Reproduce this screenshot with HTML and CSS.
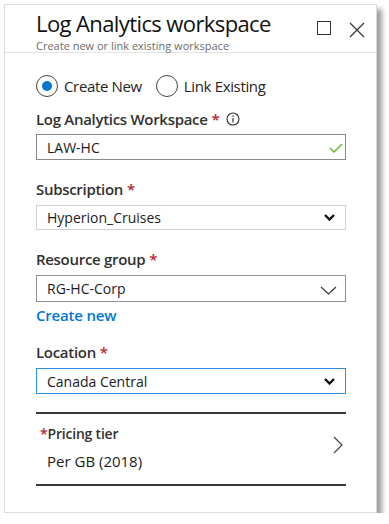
FILE: index.html
```html
<!DOCTYPE html>
<html lang="en">
<head>
    <meta charset="UTF-8">
    <meta name="viewport" content="width=device-width, initial-scale=1.0">
    <title>Log Analytics workspace</title>
    <link rel="stylesheet" href="styles.css">
</head>
<body>
    <div class="blade">
        <div class="bladeHeader">
            <div class="bladeTitles">
                <h1>Log Analytics workspace</h1>
                <div class="subtitle">Create new or link existing workspace</div>
            </div>
            <div class="bladeActions">
                <svg class="maxIcon" viewBox="0 0 14 14"><rect x="0.5" y="0.5" width="13" height="13" fill="none" stroke="#333" stroke-width="1"/></svg>
                <svg class="closeIcon" viewBox="0 0 16 16"><path d="M1 1 L15 15 M15 1 L1 15" stroke="#333" stroke-width="1.2" fill="none"/></svg>
            </div>
        </div>

        <div class="bladeBody">
            <div class="radioRow">
                <label class="radio checked"><span class="dot"></span>Create New</label>
                <label class="radio"><span class="dot"></span>Link Existing</label>
            </div>

            <!-- Workspace name -->
            <div class="fieldLabel first">Log Analytics Workspace <span class="req">*</span>
                <svg class="infoIcon" viewBox="0 0 14 14"><circle cx="7" cy="7" r="6" fill="none" stroke="#333" stroke-width="1.1"/><path d="M7 6 V10.5" stroke="#333" stroke-width="1.2"/><circle cx="7" cy="4" r="0.8" fill="#333"/></svg>
            </div>
            <div class="textBox valid">
                <span>LAW-HC</span>
                <svg class="checkIcon" viewBox="0 0 14 10"><path d="M1 5 L5 9 L13 1" fill="none" stroke="#5fb526" stroke-width="1.4"/></svg>
            </div>

            <div class="fieldLabel">Subscription <span class="req">*</span></div>
            <div class="dropDown light">
                <span>Hyperion_Cruises</span>
                <svg class="boldChevron" viewBox="0 0 11 7"><path d="M1 1 L5.5 5.5 L10 1" fill="none" stroke="#111" stroke-width="2.4"/></svg>
            </div>

            <div class="fieldLabel">Resource group <span class="req">*</span></div>
            <div class="dropDown tall">
                <span>RG-HC-Corp</span>
                <svg class="thinChevron" viewBox="0 0 17 9"><path d="M1 1 L8.5 8 L16 1" fill="none" stroke="#333" stroke-width="1.1"/></svg>
            </div>
            <a class="createLink" href="#">Create new</a>

            <div class="fieldLabel location">Location <span class="req">*</span></div>
            <div class="dropDown focused">
                <span>Canada Central</span>
                <svg class="boldChevron" viewBox="0 0 11 7"><path d="M1 1 L5.5 5.5 L10 1" fill="none" stroke="#111" stroke-width="2.4"/></svg>
            </div>

            <div class="pricingRow">
                <div class="pricingText">
                    <div class="pricingLabel"><span class="req">*</span>Pricing tier</div>
                    <div class="pricingValue">Per GB (2018)</div>
                </div>
                <svg class="rightChevron" viewBox="0 0 10 18"><path d="M1 1 L9 9 L1 17" fill="none" stroke="#444" stroke-width="1.2"/></svg>
            </div>
        </div>
    </div>
</body>
</html>
```

FILE: styles.css
```css
* {
    box-sizing: border-box;
}

body {
    margin: 0;
    background-color: white;
    font-family: 'Open Sans', 'Noto Sans', sans-serif;
    color: #252423;
}

.blade {
    margin: 4px 0 0 4px;
    width: 373px;
    height: 509px;
    background-color: white;
    border: 1px solid #dcdcdc;
    box-shadow: 5px 5px 5px rgba(0, 0, 0, 0.38);
}

.bladeHeader {
    display: flex;
    align-items: flex-start;
    padding: 5px 11px 0 31px;
    border-bottom: 1px solid #e3e3e3;
}

.bladeTitles {
    flex: 1;
}

h1 {
    margin: 0;
    font-size: 22px;
    line-height: 26px;
    font-weight: 400;
    color: #111;
    letter-spacing: -0.6px;
}

.subtitle {
    margin-top: 4px;
    font-size: 11px;
    line-height: 12px;
    color: #6b6b6b;
}

.bladeActions {
    display: flex;
    align-items: flex-start;
    gap: 18px;
    padding-top: 11px;
}

.maxIcon {
    width: 14px;
    height: 14px;
}

.closeIcon {
    width: 16px;
    height: 16px;
    margin-top: 1px;
}

.bladeBody {
    padding: 0 30px 0 31px;
}

.radioRow {
    display: flex;
    gap: 14px;
    margin-top: 22px;
}

.radio {
    display: flex;
    align-items: center;
    gap: 6px;
    font-size: 15px;
    line-height: 22px;
    letter-spacing: -0.35px;
    color: #252423;
}

.radio .dot {
    position: relative;
    width: 22px;
    height: 22px;
    border: 1px solid #444;
    border-radius: 50%;
}

.radio.checked .dot:after {
    content: "";
    position: absolute;
    left: 5px;
    top: 5px;
    width: 10px;
    height: 10px;
    border-radius: 50%;
    background-color: #0078d4;
}

.fieldLabel {
    display: flex;
    align-items: center;
    gap: 4px;
    margin-top: 19px;
    margin-bottom: 6px;
    font-size: 15px;
    line-height: 20px;
    font-weight: 600;
    letter-spacing: -0.3px;
    color: #323130;
}

.fieldLabel.first {
    margin-top: 12px;
    margin-bottom: 5px;
}

.fieldLabel.location {
    margin-top: 17px;
}

.req {
    color: #b4262c;
    font-weight: 600;
}

.infoIcon {
    width: 14px;
    height: 14px;
    margin-left: 2px;
}

.textBox,
.dropDown {
    display: flex;
    align-items: center;
    justify-content: space-between;
    height: 26px;
    padding: 0 10px 0 10px;
    border: 1px solid #8a8a8a;
    font-size: 14px;
    color: #1b1b1b;
}

.textBox.valid {
    padding-right: 2px;
}

.checkIcon {
    width: 14px;
    height: 10px;
    margin-top: 2px;
}

.dropDown.light {
    height: 25px;
    border-color: #cfcfcf;
}

.dropDown.tall {
    height: 27px;
    border-color: #8f8f8f;
    padding-right: 8px;
}

.dropDown.focused {
    border-color: #2f8fe0;
}

.boldChevron {
    width: 11px;
    height: 7px;
}

.thinChevron {
    width: 17px;
    height: 9px;
    margin-top: 4px;
}

.createLink {
    display: block;
    margin-top: 3px;
    font-size: 15px;
    line-height: 20px;
    font-weight: 600;
    letter-spacing: -0.2px;
    color: #0078d4;
    text-decoration: none;
}

.pricingRow {
    display: flex;
    align-items: center;
    justify-content: space-between;
    margin-top: 18px;
    padding: 10px 3px 13px 4px;
    border-top: 2px solid #3a3a3a;
    border-bottom: 2px solid #3a3a3a;
}

.pricingLabel {
    font-size: 14px;
    line-height: 20px;
    font-weight: 600;
    letter-spacing: -0.2px;
    color: #323130;
}

.pricingValue {
    margin-top: 7px;
    padding-left: 7px;
    font-size: 15px;
    line-height: 20px;
    color: #1b1b1b;
}

.rightChevron {
    width: 10px;
    height: 18px;
    margin-top: -6px;
}
```
